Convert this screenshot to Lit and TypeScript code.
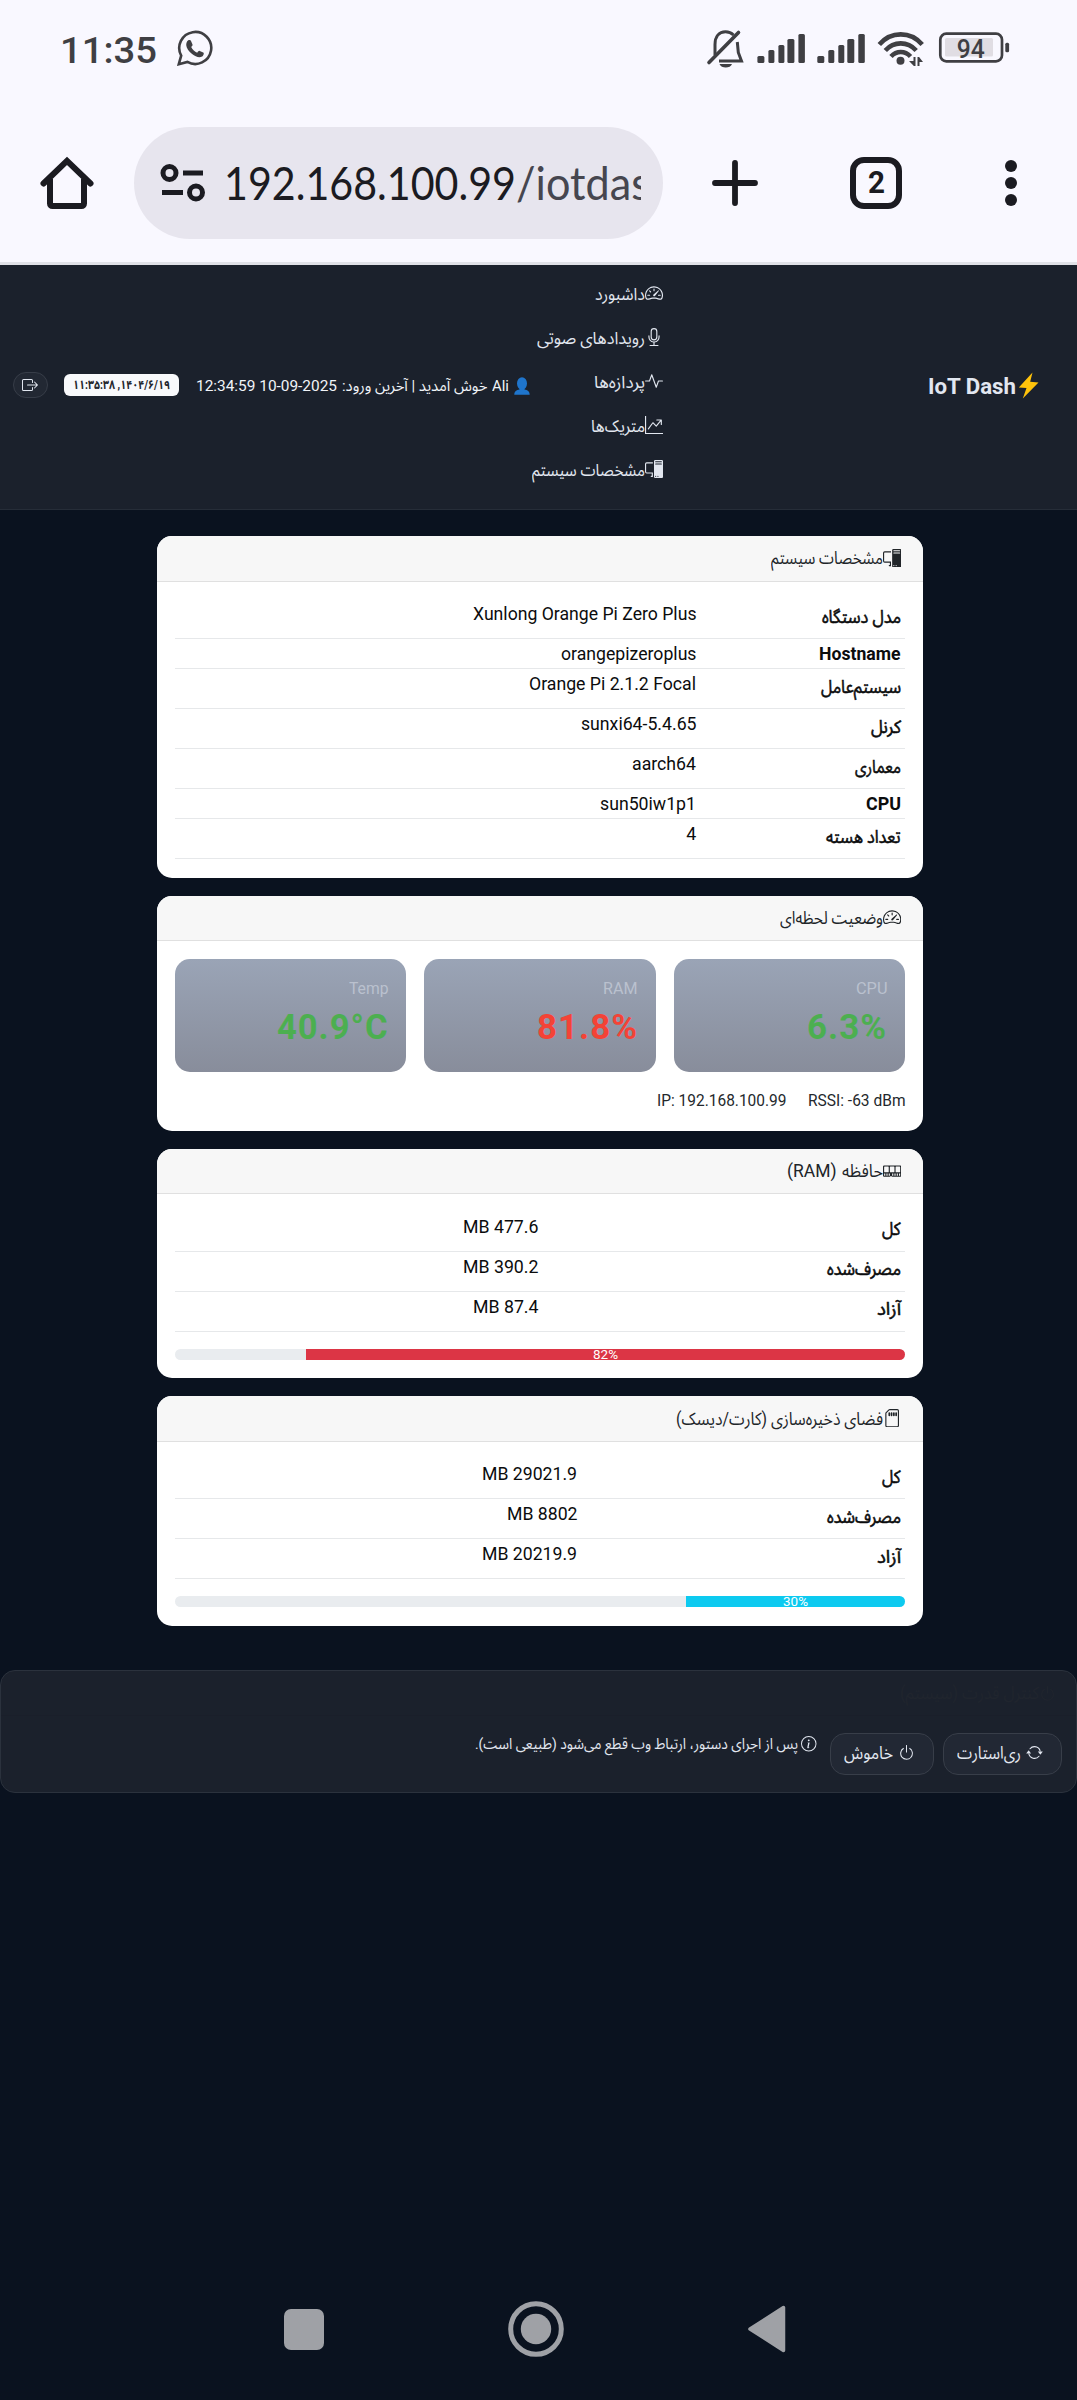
import { LitElement, html, svg, css } from "lit";
import { customElement, property } from "lit/decorators.js";

/** Bootstrap-style glyphs on a 16x16 grid. */
const ICONS: Record<string, string[]> = {
  speedometer: [
    "M8 4a.5.5 0 0 1 .5.5V6a.5.5 0 0 1-1 0V4.5A.5.5 0 0 1 8 4M3.732 5.732a.5.5 0 0 1 .707 0l.915.914a.5.5 0 1 1-.708.708l-.914-.915a.5.5 0 0 1 0-.707M2 10a.5.5 0 0 1 .5-.5h1.586a.5.5 0 0 1 0 1H2.5A.5.5 0 0 1 2 10m9.5 0a.5.5 0 0 1 .5-.5h1.5a.5.5 0 0 1 0 1H12a.5.5 0 0 1-.5-.5m.754-4.246a.39.39 0 0 0-.527-.02L7.547 9.31a.91.91 0 1 0 1.302 1.258l3.434-4.297a.39.39 0 0 0-.029-.518z",
    "M0 10a8 8 0 1 1 15.547 2.661c-.442 1.253-1.845 1.602-2.932 1.25C11.309 13.488 9.475 13 8 13c-1.474 0-3.31.488-4.615.911-1.087.352-2.49.003-2.932-1.25A8 8 0 0 1 0 10m8-7a7 7 0 0 0-6.603 9.329c.203.575.923.876 1.68.63C4.397 12.533 6.358 12 8 12s3.604.532 4.923.96c.757.245 1.477-.056 1.68-.631A7 7 0 0 0 8 3",
  ],
  mic: [
    "M3.5 6.5A.5.5 0 0 1 4 7v1a4 4 0 0 0 8 0V7a.5.5 0 0 1 1 0v1a5 5 0 0 1-4.5 4.975V15h3a.5.5 0 0 1 0 1h-7a.5.5 0 0 1 0-1h3v-2.025A5 5 0 0 1 3 8V7a.5.5 0 0 1 .5-.5",
    "M10 8a2 2 0 1 1-4 0V3a2 2 0 1 1 4 0zM8 0a3 3 0 0 0-3 3v5a3 3 0 0 0 6 0V3a3 3 0 0 0-3-3",
  ],
  activity: [
    "M6 2a.5.5 0 0 1 .47.33L10 12.036l1.53-4.208A.5.5 0 0 1 12 7.5h3.5a.5.5 0 0 1 0 1h-3.15l-1.88 5.17a.5.5 0 0 1-.94 0L6 3.964 4.47 8.171A.5.5 0 0 1 4 8.5H.5a.5.5 0 0 1 0-1h3.15l1.88-5.17A.5.5 0 0 1 6 2",
  ],
  graph: [
    "M0 0h1v15h15v1H0zm10 3.5a.5.5 0 0 1 .5-.5h4a.5.5 0 0 1 .5.5v4a.5.5 0 0 1-1 0V4.9l-3.613 4.417a.5.5 0 0 1-.74.037L7.06 6.767l-3.656 5.027a.5.5 0 0 1-.808-.588l4-5.5a.5.5 0 0 1 .758-.06l2.609 2.61L13.445 4H10.5a.5.5 0 0 1-.5-.5",
  ],
  pc: [
    "M8 1a1 1 0 0 1 1-1h6a1 1 0 0 1 1 1v14a1 1 0 0 1-1 1H9a1 1 0 0 1-1-1zm1 13.5a.5.5 0 1 0 1 0 .5.5 0 0 0-1 0m2 0a.5.5 0 1 0 1 0 .5.5 0 0 0-1 0M9.5 1a.5.5 0 0 0 0 1h5a.5.5 0 0 0 0-1zM9 3.5a.5.5 0 0 0 .5.5h5a.5.5 0 0 0 0-1h-5a.5.5 0 0 0-.5.5M1.5 2A1.5 1.5 0 0 0 0 3.5v7A1.5 1.5 0 0 0 1.5 12H6v2h-.5a.5.5 0 0 0 0 1H7v-4H1.5a.5.5 0 0 1-.5-.5v-7a.5.5 0 0 1 .5-.5H7V2z",
  ],
  memory: [
    "M1 3a1 1 0 0 0-1 1v8a1 1 0 0 0 1 1h4.586a1 1 0 0 0 .707-.293l.353-.353a.5.5 0 0 1 .708 0l.353.353a1 1 0 0 0 .707.293H15a1 1 0 0 0 1-1V4a1 1 0 0 0-1-1zm.5 1h3a.5.5 0 0 1 .5.5v4a.5.5 0 0 1-.5.5h-3a.5.5 0 0 1-.5-.5v-4a.5.5 0 0 1 .5-.5m5 0h3a.5.5 0 0 1 .5.5v4a.5.5 0 0 1-.5.5h-3a.5.5 0 0 1-.5-.5v-4a.5.5 0 0 1 .5-.5m4.5.5a.5.5 0 0 1 .5-.5h3a.5.5 0 0 1 .5.5v4a.5.5 0 0 1-.5.5h-3a.5.5 0 0 1-.5-.5zM2 10v2H1v-2zm2 0v2H3v-2zm2 0v2H5v-2zm3 0v2H8v-2zm2 0v2h-1v-2zm2 0v2h-1v-2zm2 0v2h-1v-2z",
  ],
  sdcard: [
    "M6.25 3.5a.75.75 0 0 0-1.5 0v2a.75.75 0 0 0 1.5 0zm2 0a.75.75 0 0 0-1.5 0v2a.75.75 0 0 0 1.5 0zm2 0a.75.75 0 0 0-1.5 0v2a.75.75 0 0 0 1.5 0zm2 0a.75.75 0 0 0-1.5 0v2a.75.75 0 0 0 1.5 0z",
    "M5.914 0H12.5A1.5 1.5 0 0 1 14 1.5v13a1.5 1.5 0 0 1-1.5 1.5h-9A1.5 1.5 0 0 1 2 14.5V3.914c0-.398.158-.78.44-1.06L4.853.439A1.5 1.5 0 0 1 5.914 0M13 1.5a.5.5 0 0 0-.5-.5H5.914a.5.5 0 0 0-.353.146L3.146 3.561A.5.5 0 0 0 3 3.914V14.5a.5.5 0 0 0 .5.5h9a.5.5 0 0 0 .5-.5z",
  ],
  repeat: [
    "M11.534 7h3.932a.25.25 0 0 1 .192.41l-1.966 2.36a.25.25 0 0 1-.384 0l-1.966-2.36a.25.25 0 0 1 .192-.41m-11 2h3.932a.25.25 0 0 0 .192-.41L2.692 6.23a.25.25 0 0 0-.384 0L.342 8.59A.25.25 0 0 0 .534 9",
    "M8 3c-1.552 0-2.94.707-3.857 1.818a.5.5 0 1 1-.771-.636A6.002 6.002 0 0 1 13.917 7H12.9A5 5 0 0 0 8 3M3.1 9a5.002 5.002 0 0 0 8.757 2.182.5.5 0 1 1 .771.636A6.002 6.002 0 0 1 2.083 9z",
  ],
  power: [
    "M7.5 1v7h1V1z",
    "M3 8.812a5 5 0 0 1 2.578-4.375l-.485-.874A6 6 0 1 0 11 3.616l-.501.865A5 5 0 1 1 3 8.812",
  ],
  info: [
    "M8 15A7 7 0 1 1 8 1a7 7 0 0 1 0 14m0 1A8 8 0 1 0 8 0a8 8 0 0 0 0 16",
    "m8.93 6.588-2.29.287-.082.38.45.083c.294.07.352.176.288.469l-.738 3.468c-.194.897.105 1.319.808 1.319.545 0 1.178-.252 1.465-.598l.088-.416c-.2.176-.492.246-.686.246-.275 0-.375-.193-.304-.533zM9 4.5a1 1 0 1 1-2 0 1 1 0 0 1 2 0",
  ],
  exit: [
    "M10 12.5a.5.5 0 0 1-.5.5h-8a.5.5 0 0 1-.5-.5v-9a.5.5 0 0 1 .5-.5h8a.5.5 0 0 1 .5.5v2a.5.5 0 0 0 1 0v-2A1.5 1.5 0 0 0 9.5 2h-8A1.5 1.5 0 0 0 0 3.5v9A1.5 1.5 0 0 0 1.5 14h8a1.5 1.5 0 0 0 1.5-1.5v-2a.5.5 0 0 0-1 0z",
    "M15.854 8.354a.5.5 0 0 0 0-.708l-3-3a.5.5 0 0 0-.708.708L14.293 7.5H5.5a.5.5 0 0 0 0 1h8.793l-2.147 2.146a.5.5 0 0 0 .708.708z",
  ],
};

const icon = (name: string) => html`<svg class="bi" viewBox="0 0 16 16" fill="currentColor">
  ${ICONS[name].map((d) => svg`<path fill-rule="evenodd" d=${d}></path>`)}
</svg>`;

const fit = (text: string, w: number, cls = "") =>
  html`<fit-text class=${cls} .text=${text} .w=${w}></fit-text>`;

/** One line of text condensed or stretched to a given advance width. */
@customElement("fit-text")
class FitText extends LitElement {
  static styles = css`
    :host { display: inline-block; flex: none; white-space: nowrap; }
    .rtl, .ltr { display: block; width: max-content; transform-origin: 0 50%; }
    .rtl { direction: rtl; }
    .ltr { direction: ltr; }
    .box { direction: ltr; }
  `;
  @property() text = "";
  @property({ type: Number }) w = 0;

  render() {
    const rtl = /[\u0600-\u06FF]/.test(this.text);
    return html`<div class="box"><span class=${rtl ? "rtl" : "ltr"}>${this.text}</span></div>`;
  }

  updated() {
    const span = this.renderRoot.querySelector("span") as HTMLElement;
    span.style.transform = "none";
    const natural = span.getBoundingClientRect().width;
    this.style.width = `${this.w}px`;
    if (natural > 0) span.style.transform = `scaleX(${this.w / natural})`;
  }
}

@customElement("phone-status")
class PhoneStatus extends LitElement {
  static styles = css`
    :host { display: flex; box-sizing: border-box; height: 96px; padding: 29px 67px 0 60px; direction: ltr;
      align-items: flex-start; color: #3f3f43; font-family: Roboto, sans-serif; }
    .clock { font-size: 37.5px; font-weight: 500; line-height: 42px; }
    .wa { width: 36px; height: 36px; margin: 1px 0 0 20px; flex: none; }
    .right { display: flex; margin-left: auto; }
    .tray { width: 304px; height: 42px; display: block; }
    .pct { font: 500 25px Roboto, sans-serif; }
  `;
  bars(x: number) {
    return [[0, 7, 56], [11, 6, 50], [21, 6, 45], [30, 7, 39], [41, 6.5, 34]].map(
      ([dx, w, y]) => svg`<rect x=${x + dx} y=${y} width=${w} height=${63 - y} rx="1.5"></rect>`
    );
  }
  render() {
    return html`
      ${fit("11:35", 97, "clock")}
      <svg class="wa" viewBox="0 0 36 36" fill="none" stroke="currentColor" stroke-width="2.6">
        <path d="M1.8 34.2l2.4-8.6A16 16 0 1 1 10.4 31.900z" stroke-linejoin="miter"></path>
        <path fill="currentColor" stroke="none" d="M10.2 11.200c1-1.400 3-1.800 3.600-.6l1.700 3.800c.3.800-.3 1.500-1.300 2.600 1.500 2.900 3.400 4.500 6 5.700 1.100-1.300 1.700-2.100 2.500-1.800l3.500 1.700c1.300.7.2 3.200-1.100 4-2.800 1.600-6.700.2-10-2.500-3.200-2.600-5.800-6.200-5.900-9.100 0-1.500.3-2.800 1-3.800z"></path>
      </svg>
      <div class="right">
        <svg class="tray" viewBox="706 29 304 42" fill="currentColor">
          <g fill="none" stroke="currentColor" stroke-width="3">
            <path d="M715 55V44.500c0-8 4-12.700 10.500-12.700 3.500 0 6 1.200 8 3.200M737.300 42l1 10.500 3.200 8.500H719"></path>
            <path d="M709 62.500L738.500 32.500" stroke-width="3.600" stroke-linecap="round"></path>
          </g>
          <path d="M719.500 64h12.500c-1.500 4.800-11 4.800-12.500 0z"></path>
          ${this.bars(757.4)} ${this.bars(817.3)}
          <g fill="none" stroke="currentColor" stroke-width="4.600">
            <path d="M879.300 44.500C891 31 910.500 31 922.200 44.500"></path>
            <path d="M885.300 50.500C894 41 907.500 41 916.200 50.500"></path>
            <path d="M891 56.500C896.500 50.500 905 50.500 910.500 56.500"></path>
          </g>
          <circle cx="900.500" cy="60.800" r="4"></circle>
          <path d="M913.500 57h2v9h-1.600l-4.900-5h4.500zM917.500 66v-9h1.600l3.900 5h-3.500v4z"></path>
          <rect x="940.300" y="33.700" width="61.700" height="27.600" rx="6" fill="none" stroke="currentColor" stroke-width="2.700"></rect>
          <rect x="945" y="38" width="48" height="18.500" rx="1.500" fill="#e0dde3"></rect>
          <rect x="1005.300" y="42.700" width="3.800" height="9.600" rx="1.500"></rect>
          <text class="pct" x="970.700" y="57.800" text-anchor="middle" textLength="28" lengthAdjust="spacingAndGlyphs">94</text>
        </svg>
      </div>`;
  }
}

@customElement("browser-bar")
class BrowserBar extends LitElement {
  static styles = css`
    :host { display: flex; box-sizing: border-box; height: 169px; padding: 31px 60px 23px 40px; direction: ltr;
      align-items: center; border-bottom: 3px solid #e0e1e7; color: #1b1b21; font-family: Roboto, sans-serif; }
    .home { width: 54px; height: 54px; flex: none; }
    .pill { display: flex; align-items: center; box-sizing: border-box; width: 529.500px; height: 112.5px; margin-left: 39.5px;
      padding-left: 26px; border-radius: 57px; background: #e7e5ee; flex: none; }
    .tune { width: 46px; height: 40px; flex: none; }
    .url { display: flex; width: 416.500px; overflow: hidden; margin-left: 18.500px; font: 400 46px/60px Lato, sans-serif; }
    .path { color: #46464f; }
    .plus { width: 46px; height: 46px; margin-left: 49px; flex: none; }
    .tabs { display: flex; box-sizing: border-box; width: 52px; height: 52px; margin-left: 92px; border: 6px solid #1b1b21;
      border-radius: 14px; align-items: center; justify-content: center; font-size: 31px; font-weight: 700; line-height: 36px; flex: none; }
    .dots { display: flex; flex-direction: column; gap: 5px; margin-left: auto; }
    .dot { width: 12px; height: 12px; border-radius: 50%; background: #1b1b21; }
  `;
  render() {
    return html`
      <svg class="home" viewBox="0 0 54 54" fill="none" stroke="currentColor" stroke-width="6">
        <path d="M3.500 27.500L27 4.800 50.500 27.500" stroke-linecap="round"></path>
        <path d="M10 23v24.500c0 1.500 1 2.500 2.500 2.500h29c1.500 0 2.500-1 2.500-2.500V23"></path>
      </svg>
      <div class="pill">
        <svg class="tune" viewBox="0 0 46 40" fill="none" stroke="currentColor" stroke-width="5">
          <circle cx="9.500" cy="10" r="6.500"></circle><path d="M23 10h20M2 29.500h21"></path>
          <circle cx="36" cy="29.500" r="6.500"></circle>
        </svg>
        <div class="url">${fit("192.168.100.99", 292, "host")}${fit("/iotdash", 158, "path")}</div>
      </div>
      <svg class="plus" viewBox="0 0 46 46" stroke="currentColor" stroke-width="5.800" stroke-linecap="round">
        <path d="M23 3v40M3 23h40"></path>
      </svg>
      <div class="tabs">${fit("2", 17)}</div>
      <div class="dots"><i class="dot"></i><i class="dot"></i><i class="dot"></i></div>`;
  }
}

@customElement("top-nav")
class TopNav extends LitElement {
  static styles = css`
    :host { display: flex; box-sizing: border-box; height: 245px; padding: 0 38.500px 0 13px; direction: rtl; background: #1b212c;
      border-bottom: 1px solid #262d38; color: #e2e7f0; font-family: Roboto, "Noto Sans Arabic", "DejaVu Sans", sans-serif; }
    .bi { display: block; width: 18px; height: 18px; flex: none; }
    .brand { display: flex; align-items: center; width: 375.500px; gap: 2px; padding-bottom: 3px; box-sizing: border-box; font-size: 22.5px; font-weight: 700; }
    .bolt { width: 21px; height: 27px; }
    .menu { display: flex; flex-direction: column; width: 133px; padding-top: 7px; }
    .item { display: flex; align-items: center; height: 44.1px; font-size: 17px; line-height: 24px; }
    .item .bi { margin-bottom: 2px; }
    .user { display: flex; align-items: center; gap: 5px; font-size: 15.5px; padding-bottom: 3px; color: #f1f4f8; }
    .person { width: 16px; height: 18px; margin-right: 0; }
    .badge { display: flex; align-items: center; justify-content: center; width: 114.500px; height: 22.500px; margin: auto 17px auto 0; background: #f8f9fb;
      position: relative; top: -2px; border-radius: 6px; color: #23272d; font-size: 12.500px; font-weight: 700; }
    .exit { display: flex; align-items: center; justify-content: center; box-sizing: border-box; width: 34.500px; height: 26px; margin: auto auto auto 0;
      position: relative; top: -2px; border: 1px solid #373d48; border-radius: 13px; background: #222833; }
    .exit .bi { width: 16px; height: 16px; }
    .gap { margin-right: 0; }
  `;
  items: [string, string, number][] = [
    ["speedometer", "داشبورد", 50],
    ["mic", "رویدادهای صوتی", 108],
    ["activity", "پردازه‌ها", 51],
    ["graph", "متریک‌ها", 54],
    ["pc", "مشخصات سیستم", 113],
  ];
  render() {
    return html`
      <div class="brand">
        <svg class="bolt" viewBox="0 0 21 27"><path fill="#ffc30b" d="M14.500.5L.8 15.500l7.700.5-3.700 10.500L20.500 10.500l-8.300-.8z"></path></svg>
        ${fit("IoT Dash", 88)}
      </div>
      <div class="menu">${this.items.map(([i, t, w]) => html`<div class="item">${icon(i)}${fit(t, w)}</div>`)}</div>
      <div class="user">
        <svg class="person" viewBox="0 0 16 18" fill="#1f75cc"><ellipse cx="8" cy="6.500" rx="5" ry="6.200"></ellipse><path d="M5.500 10h5v2.500c3 .6 5.200 2 5.200 5.200H.3c0-3.200 2.200-4.600 5.200-5.200z"></path></svg>
        ${fit("Ali", 17)}${fit("خوش آمدید | آخرین ورود:", 145.5)}${fit("12:34:59 10-09-2025", 141)}
      </div>
      <div class="badge">${fit("۱۴۰۴/۶/۱۹, ۱۱:۳۵:۳۸", 97)}</div>
      <div class="exit">${icon("exit")}</div>`;
  }
}

type Row = [label: string, labelW: number, value: string, valueW: number];

@customElement("info-card")
class InfoCard extends LitElement {
  static styles = css`
    :host { display: block; box-sizing: border-box; width: 766.6px; border-radius: 15px; background: #fff; overflow: hidden; direction: rtl;
      color: #212529; font-family: Roboto, "Noto Sans Arabic", "DejaVu Sans", sans-serif; }
    .head { display: flex; align-items: center; box-sizing: border-box; height: 45.500px; padding: 0 22px 0 0; background: #f7f7f7;
      border-bottom: 1px solid #e0e0e0; font-size: 17.500px; line-height: 26px; }
    .bi { display: block; width: 18.300px; height: 18.300px; margin-bottom: 1px; flex: none; }
    .mark { margin-left: 6px; }
    .body { padding: 17.500px 18px 0; }
    .row { display: flex; box-sizing: border-box; height: 40px; border-bottom: 1px solid #e6e8ea; color: #0b0c0d; font-size: 17.800px; line-height: 30px; }
    .latin { height: 30.200px; }
    .th { box-sizing: border-box; padding: 2.500px 4.500px 0 0; flex: none; -webkit-text-stroke: .55px currentColor; }
    .latin .th { padding-top: 0; font-weight: 700; -webkit-text-stroke: 0; }
  `;
  @property() icon = "pc";
  @property({ attribute: false }) titles: [string, number][] = [];
  @property({ attribute: false }) rows: Row[] = [];
  @property({ type: Number }) col = 205;
  render() {
    return html`
      <div class="head">${icon(this.icon)}${this.titles.map(([t, w], i) => html`${fit(t, w, i < this.titles.length - 1 ? "mark" : "")}`)}</div>
      <div class="body">
        ${this.rows.map(
          ([l, lw, v, vw]) => html`<div class="row ${/^[A-Z]/.test(l) ? "latin" : ""}">
            <div class="th" style="width:${this.col}px">${fit(l, lw)}</div>
            <div class="td">${fit(v, vw)}</div>
          </div>`
        )}
        <slot></slot>
      </div>`;
  }
}

@customElement("app-root")
class AppRoot extends LitElement {
  static styles = css`
    :host { display: flex; flex-direction: column; box-sizing: border-box; width: 1077px; height: 2400px; background: #0a121f; overflow: hidden;
      direction: rtl; font-family: Roboto, "Noto Sans Arabic", "DejaVu Sans", sans-serif; }
    .chrome { background: #f9f8ff; }
    .cards { display: flex; flex-direction: column; align-items: center; gap: 18px; padding: 26px 0 0 3px; }
    .c1 { height: 341.700px; } .c2 { height: 235.300px; } .c3 { height: 229.300px; } .c4 { height: 229.300px; }
    .tiles { display: grid; grid-template-columns: repeat(3, 1fr); gap: 18px; }
    .tile { box-sizing: border-box; height: 113.400px; padding: 18px 18px 0; border-radius: 15px; background: linear-gradient(#9aa4b6, #888d9b); text-align: right; }
    .name { display: block; font-size: 16.300px; line-height: 24px; color: #bac1ce; }
    .val { font-size: 34.500px; font-weight: 700; line-height: 42px; letter-spacing: 1px; padding-top: 5px; }
    .ok { color: #4caf50; } .hot { color: #f44336; }
    .net { display: flex; gap: 21px; margin-top: 17px; font-size: 15.600px; line-height: 24px; color: #24282c; }
    .meter { display: flex; height: 11px; margin-top: 17px; border-radius: 5.500px; background: #e9ecef; }
    .fill { display: flex; align-items: center; justify-content: center; font-size: 12.500px; line-height: 11px; color: #fff; border-radius: 0 5.500px 5.500px 0; }
    .red { background: #dc3545; } .cyan { background: #0dcaf0; }
    .power { box-sizing: border-box; height: 123px; margin-top: 44.500px; border: 1px solid #2b323d; border-radius: 15px; background: #1b212c; color: #e2e7f0; }
    .bi { display: block; width: 17px; height: 17px; flex: none; }
    .ghost { display: flex; align-items: center; box-sizing: border-box; height: 45px; padding-right: 20px; color: #20252e; font-size: 17.500px; border-bottom: 1px solid #1a1f2a; }
    .acts { display: flex; gap: 9px; padding: 17px 14.500px 0 0; font-size: 17.500px; }
    .btn { display: flex; align-items: center; box-sizing: border-box; height: 41.500px; padding: 0 18px 1px 0; gap: 5px; border: 1px solid #383e49; border-radius: 15px; background: #222834; }
    .btn .bi { margin-bottom: 1px; }
    .b1 { width: 118.600px; } .b2 { width: 104px; }
    .note { display: flex; align-items: center; gap: 3px; height: 22px; margin-right: 4px; font-size: 15.500px; }
    .note .bi { width: 15.500px; height: 15.500px; }
    .keys { display: flex; align-items: center; direction: ltr; height: 60px; margin: auto 0 41px; padding: 0 291px 0 283.500px; justify-content: space-between; }
    .sq { width: 40.500px; height: 41px; border-radius: 7px; background: #9fa1a6; }
    .ring { width: 56px; height: 56px; } .tri { width: 39px; height: 48px; }
  `;
  render() {
    const tile = (n: string, nw: number, v: string, vw: number, c: string) => html`<div class="tile">
      <div class="name">${fit(n, nw)}</div><div class="val ${c}">${fit(v, vw)}</div></div>`;
    const meter = (pct: number, label: string, c: string) =>
      html`<div class="meter"><div class="fill ${c}" style="width:${pct}%">${fit(label, 25)}</div></div>`;
    return html`
      <div class="chrome"><phone-status></phone-status><browser-bar></browser-bar></div>
      <top-nav></top-nav>
      <div class="cards">
        <info-card class="c1" icon="pc" .col=${209} .titles=${[["مشخصات سیستم", 112]]} .rows=${[
          ["مدل دستگاه", 79, "Xunlong Orange Pi Zero Plus", 223.5],
          ["Hostname", 81.5, "orangepizeroplus", 135.5],
          ["سیستم‌عامل", 80, "Orange Pi 2.1.2 Focal", 167],
          ["کرنل", 30, "sunxi64-5.4.65", 115.5],
          ["معماری", 46, "aarch64", 64],
          ["CPU", 35, "sun50iw1p1", 96],
          ["تعداد هسته", 74.5, "4", 10],
        ]}></info-card>
        <info-card class="c2" icon="speedometer" .titles=${[["وضعیت لحظه‌ای", 103]]}>
          <div class="tiles">
            ${tile("CPU", 31.5, "6.3%", 80, "ok")}${tile("RAM", 34.5, "81.8%", 101, "hot")}${tile("Temp", 39.5, "40.9°C", 111.5, "ok")}
          </div>
          <div class="net">${fit("RSSI: -63 dBm", 97.5)}${fit("IP: 192.168.100.99", 129.5)}</div>
        </info-card>
        <info-card class="c3" icon="memory" .col=${366.5} .titles=${[["حافظه", 41], ["(RAM)", 49.5]]} .rows=${[
          ["کل", 18.5, "MB 477.6", 75.5],
          ["مصرف‌شده", 74, "MB 390.2", 75.5],
          ["آزاد", 24, "MB 87.4", 65.5],
        ]}>${meter(82, "82%", "red")}</info-card>
        <info-card class="c4" icon="sdcard" .col=${328} .titles=${[["فضای ذخیره‌سازی (کارت/دیسک)", 207]]} .rows=${[
          ["کل", 18.5, "MB 29021.9", 95],
          ["مصرف‌شده", 74, "MB 8802", 70.5],
          ["آزاد", 24, "MB 20219.9", 95],
        ]}>${meter(30, "30%", "cyan")}</info-card>
      </div>
      <div class="power">
        <div class="ghost">${icon("power")}${fit("کنترل قدرت (سیستم)", 139)}</div>
        <div class="acts">
          <div class="btn b1">${icon("repeat")}${fit("ری‌استارت", 64)}</div>
          <div class="btn b2">${icon("power")}${fit("خاموش", 49)}</div>
          <div class="note">${icon("info")}${fit("پس از اجرای دستور، ارتباط وب قطع می‌شود (طبیعی است).", 323)}</div>
        </div>
      </div>
      <div class="keys">
        <div class="sq"></div>
        <svg class="ring" viewBox="0 0 56 56"><circle cx="28" cy="28" r="25.300" fill="none" stroke="#9fa1a6" stroke-width="5"></circle><circle cx="28" cy="28" r="15.200" fill="#9fa1a6"></circle></svg>
        <svg class="tri" viewBox="0 0 39 48"><path d="M3 24L36.500 2.500v43z" fill="#9fa1a6" stroke="#9fa1a6" stroke-width="3.500" stroke-linejoin="round"></path></svg>
      </div>`;
  }
}
